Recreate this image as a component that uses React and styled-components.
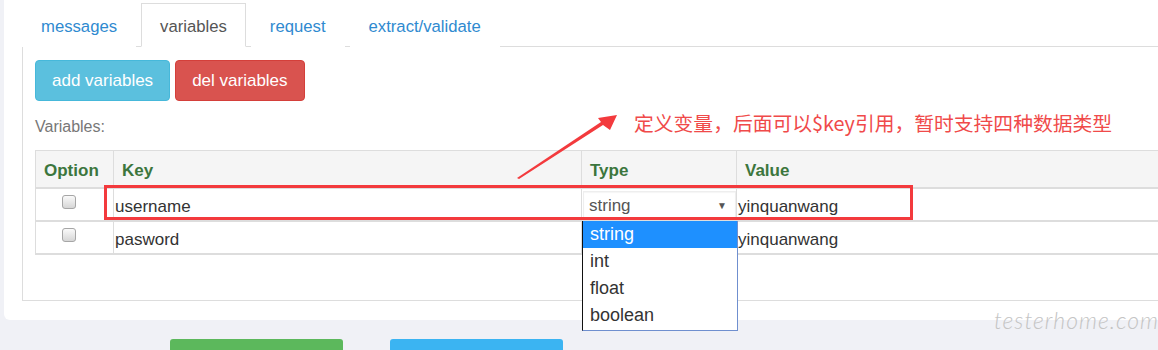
import React from 'react';
import styled, { createGlobalStyle } from 'styled-components';

const GlobalStyle = createGlobalStyle`
  html, body {
    margin: 0;
    padding: 0;
    background: #f0f1f6;
    overflow: hidden;
  }
  body {
    font-family: "Liberation Sans", Arial, sans-serif;
    color: #333;
  }
`;

const Page = styled.div`
  position: relative;
  width: 1158px;
  height: 350px;
  overflow: hidden;
  padding-left: 4px;
  box-sizing: border-box;
`;

const Panel = styled.div`
  width: 1200px;
  background: #fff;
  padding: 3px 0 19px 18px;
  box-sizing: border-box;
  border-bottom-left-radius: 6px;
`;

const Tabs = styled.ul`
  display: flex;
  margin: 0;
  padding: 0;
  list-style: none;
  border-bottom: 1px solid #ddd;
`;

const Tab = styled.li`
  margin: 0 5px -1px 0;
  padding: 3px 18px 0;
  line-height: 39px;
  font-size: 16.7px;
  border: 1px solid ${({ active }) => (active ? '#ddd' : 'transparent')};
  border-bottom-color: ${({ active }) => (active ? '#fff' : 'transparent')};
  background: #fff;
  color: ${({ active }) => (active ? '#555' : '#2f8ad0')};
`;

const TabContent = styled.div`
  height: 254px;
  box-sizing: border-box;
  border: 1px solid #ddd;
  border-top: none;
  padding: 13px 0 0 12px;
`;

const ButtonRow = styled.div`
  display: flex;
  gap: 5px;
`;

const Button = styled.button`
  height: 41px;
  padding: 0 16px;
  border: 1px solid ${({ tone }) => (tone === 'danger' ? '#d43f3a' : '#46b8da')};
  border-radius: 4px;
  background: ${({ tone }) => (tone === 'danger' ? '#d9534f' : '#5bc0de')};
  color: #fff;
  font-family: inherit;
  font-size: 17px;
`;

const Label = styled.div`
  margin-top: 16px;
  line-height: 20px;
  font-size: 16px;
  color: #777;
`;

const Table = styled.table`
  margin-top: 13px;
  width: 1160px;
  border-collapse: collapse;
  table-layout: fixed;
  font-size: 17px;
`;

const Th = styled.th`
  height: 33px;
  padding: 3px 0 0 8px;
  text-align: left;
  background: #f5f5f5;
  color: #3c763d;
  font-weight: bold;
  border: 1px solid #ddd;
  border-bottom-width: 2px;
`;

const Td = styled.td`
  height: 26px;
  padding: ${({ flush }) => (flush ? '0' : '5px')} 0 0 1px;
  text-align: left;
  vertical-align: ${({ top }) => (top ? 'top' : 'middle')};
  border-left: 1px solid #ddd;
  border-right: 1px solid #ddd;
  border-bottom: 2px solid #ddd;
  color: #333;
`;

const CheckCell = styled(Td)`
  padding: 0 0 0 26px;
  vertical-align: top;
`;

const Checkbox = styled.span`
  display: inline-block;
  width: 12px;
  height: 12px;
  margin-top: 6px;
  border: 1px solid #a6a6a6;
  border-radius: 3px;
  background: linear-gradient(#fafafa, #d6d6d6);
`;

const Select = styled.div`
  display: flex;
  justify-content: space-between;
  align-items: center;
  height: 28px;
  margin: 2px 0 0;
  padding: 1px 8px 0 5px;
  box-sizing: border-box;
  border: 1px solid #eee;
  box-shadow: inset 0 1px 1px rgba(0, 0, 0, 0.04);
  color: #555;
  font-size: 17px;
`;

const Caret = styled.span`
  font-size: 10px;
  color: #555;
`;

const Dropdown = styled.ul`
  position: absolute;
  left: 582px;
  top: 221px;
  width: 154px;
  margin: 0;
  padding: 0 0 1px;
  list-style: none;
  background: #fff;
  border: 1px solid #6f8fcf;
  border-left-color: #111;
  border-top: none;
  font-size: 18px;
`;

const Option = styled.li`
  height: 27px;
  line-height: 27px;
  padding-left: 7px;
  background: ${({ selected }) => (selected ? '#1e90ff' : 'transparent')};
  color: ${({ selected }) => (selected ? '#fff' : '#333')};
`;

const MarkBox = styled.div`
  position: absolute;
  left: 104px;
  top: 185px;
  width: 803px;
  height: 29px;
  border: 3px solid #f33a3d;
`;

const Note = styled.div`
  position: absolute;
  left: 634px;
  top: 110px;
  font-family: "Noto Sans CJK SC", "Liberation Serif", serif;
  font-size: 19.8px;
  line-height: 26px;
  color: #f04a4a;
  white-space: nowrap;
`;

const ArrowSvg = styled.svg`
  position: absolute;
  left: 500px;
  top: 100px;
`;

const Footer = styled.div`
  display: flex;
  gap: 47px;
  margin-top: 19px;
  padding-left: 166px;
`;

const FootButton = styled.div`
  width: 173px;
  height: 30px;
  border-radius: 3px 3px 0 0;
  background: ${({ tone }) => (tone === 'green' ? '#5cb85c' : '#3bb4f2')};
`;

const Watermark = styled.div`
  position: absolute;
  left: 994px;
  top: 306px;
  font-family: Lato, "DejaVu Sans", sans-serif;
  font-weight: 300;
  font-style: italic;
  font-size: 23px;
  letter-spacing: 1px;
  color: #c4c4c4;
`;

const rows = [
  { key: 'username', type: 'string', value: 'yinquanwang' },
  { key: 'pasword', type: null, value: 'yinquanwang' },
];

export default function App() {
  return (
    <>
      <GlobalStyle />
      <Page>
        <Panel>
          <Tabs>
            <Tab>messages</Tab>
            <Tab active>variables</Tab>
            <Tab>request</Tab>
            <Tab>extract/validate</Tab>
          </Tabs>
          <TabContent>
            <ButtonRow>
              <Button>add variables</Button>
              <Button tone="danger">del variables</Button>
            </ButtonRow>
            <Label>Variables:</Label>
            <Table>
              <colgroup>
                <col style={{ width: 78 }} />
                <col style={{ width: 468 }} />
                <col style={{ width: 155 }} />
                <col />
              </colgroup>
              <thead>
                <tr>
                  <Th>Option</Th>
                  <Th>Key</Th>
                  <Th>Type</Th>
                  <Th>Value</Th>
                </tr>
              </thead>
              <tbody>
                {rows.map((r) => (
                  <tr key={r.key}>
                    <CheckCell>
                      <Checkbox />
                    </CheckCell>
                    <Td>{r.key}</Td>
                    <Td flush top>
                      {r.type && (
                        <Select>
                          {r.type}
                          <Caret>▼</Caret>
                        </Select>
                      )}
                    </Td>
                    <Td>{r.value}</Td>
                  </tr>
                ))}
              </tbody>
            </Table>
          </TabContent>
        </Panel>
        <Footer>
          <FootButton tone="green" />
          <FootButton tone="blue" />
        </Footer>

        <MarkBox />
        <ArrowSvg width="130" height="90" viewBox="0 0 130 90">
          <polygon points="17,78 101,22 98,18 117,15 110,30 103,25 19,79" fill="#f33a3d" />
        </ArrowSvg>
        <Note>定义变量，后面可以$key引用，暂时支持四种数据类型</Note>
        <Dropdown>
          <Option selected>string</Option>
          <Option>int</Option>
          <Option>float</Option>
          <Option>boolean</Option>
        </Dropdown>
        <Watermark>testerhome.com</Watermark>
      </Page>
    </>
  );
}
